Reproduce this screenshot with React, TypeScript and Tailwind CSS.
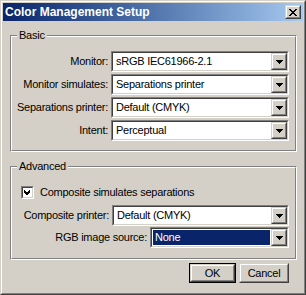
import React from "react";

const sunkenOuter =
  "border border-t-[#808080] border-l-[#808080] border-b-white border-r-white";
const sunkenInner =
  "border border-t-[#404040] border-l-[#404040] border-b-[#d4d0c8] border-r-[#d4d0c8]";
const raisedOuter =
  "border border-t-[#d4d0c8] border-l-[#d4d0c8] border-b-[#404040] border-r-[#404040]";
const raisedInner =
  "border border-t-white border-l-white border-b-[#808080] border-r-[#808080]";

const font = "font-['Liberation_Sans',Arial,sans-serif]";

function Arrow() {
  return (
    <svg width="7" height="4" viewBox="0 0 7 4" shapeRendering="crispEdges">
      <rect x="0" y="0" width="7" height="1" fill="#000" />
      <rect x="1" y="1" width="5" height="1" fill="#000" />
      <rect x="2" y="2" width="3" height="1" fill="#000" />
      <rect x="3" y="3" width="1" height="1" fill="#000" />
    </svg>
  );
}

function Combo({ value, selected, width }: { value: string; selected?: boolean; width: string }) {
  return (
    <div className={`${sunkenOuter} h-[21px] ${width} shrink-0`}>
      <div className={`${sunkenInner} h-full flex bg-white`}>
        <div className="flex-1 flex p-[1px]">
          <div
            className={`flex-1 flex items-center pl-[2px] leading-none whitespace-nowrap ${
              selected ? "bg-[#0a246a] text-white" : "text-black"
            }`}
          >
            {value}
          </div>
        </div>
        <div className={`${raisedOuter} w-[16px] h-full bg-[#d4d0c8]`}>
          <div className={`${raisedInner} h-full flex items-center justify-center`}>
            <Arrow />
          </div>
        </div>
      </div>
    </div>
  );
}

function GroupBox({
  label,
  className,
  children,
}: {
  label: string;
  className: string;
  children: React.ReactNode;
}) {
  return (
    <div
      className={`relative border border-t-[#808080] border-l-[#808080] border-b-white border-r-white ${className}`}
    >
      <div className="border border-t-white border-l-white border-b-[#808080] border-r-[#808080] h-full">
        {children}
      </div>
      <div className="absolute left-[6px] top-[-7px] px-[2px] bg-[#d4d0c8] leading-[13px] text-black whitespace-nowrap">
        {label}
      </div>
    </div>
  );
}

function Row({ label, value }: { label: string; value: string }) {
  return (
    <div className="flex items-center justify-end gap-[3px] h-[21px]">
      <span className="leading-none whitespace-nowrap">{label}</span>
      <Combo value={value} width="w-[178px]" />
    </div>
  );
}

function Button({ label, isDefault, width }: { label: string; isDefault?: boolean; width: string }) {
  const inner = (
    <div className={`${raisedOuter} h-full`}>
      <div className={`${raisedInner} h-full flex items-center justify-center leading-none`}>
        {label}
      </div>
    </div>
  );
  return (
    <div className={`${width} h-[20px] ${isDefault ? "border border-black" : ""}`}>{inner}</div>
  );
}

export default function App() {
  return (
    <div
      className={`w-[306px] h-[295px] bg-[#d4d0c8] border border-t-[#d4d0c8] border-l-[#d4d0c8] border-b-[#404040] border-r-[#404040] text-[11px] tracking-[-0.25px] text-black ${font}`}
    >
      <div className="h-full border border-t-white border-l-white border-b-[#808080] border-r-[#808080] p-[1px] flex flex-col">
        <div className="h-[18px] shrink-0 flex items-center justify-between bg-gradient-to-r from-[#0a246a] to-[#a6caf0] pl-[2px] pr-[2px]">
          <span className="font-bold text-[12px] tracking-normal text-white leading-none">
            Color Management Setup
          </span>
          <div className={`${raisedOuter} w-[16px] h-[14px] bg-[#d4d0c8]`}>
            <div className={`${raisedInner} h-full flex items-center justify-center`}>
              <svg width="8" height="7" viewBox="0 0 8 7" shapeRendering="crispEdges">
                <path
                  d="M0 0h2v1H0zM6 0h2v1H6zM1 1h2v1H1zM5 1h2v1H5zM2 2h4v1H2zM3 3h2v1H3zM2 4h4v1H2zM1 5h2v1H1zM5 5h2v1H5zM0 6h2v1H0zM6 6h2v1H6z"
                  fill="#000"
                />
              </svg>
            </div>
          </div>
        </div>

        <GroupBox label="Basic" className="mt-[14px] ml-[7px] w-[287px] h-[117px] shrink-0">
          <div className="flex flex-col gap-[2px] pt-[14px] pr-[6px]">
            <Row label="Monitor:" value="sRGB IEC61966-2.1" />
            <Row label="Monitor simulates:" value="Separations printer" />
            <Row label="Separations printer:" value="Default (CMYK)" />
            <Row label="Intent:" value="Perceptual" />
          </div>
        </GroupBox>

        <GroupBox label="Advanced" className="mt-[14px] ml-[7px] w-[287px] h-[94px] shrink-0">
          <div className="flex flex-col pt-[18px] pr-[6px]">
            <div className="flex items-center pl-[9px] h-[13px]">
              <div className={`${sunkenOuter} w-[13px] h-[13px]`}>
                <div className={`${sunkenInner} h-full bg-white flex items-center justify-center`}>
                  <svg width="7" height="7" viewBox="0 0 7 7" shapeRendering="crispEdges">
                    <path d="M6 0v3L3 6H2L0 4V1l2 2h1z" fill="#000" />
                  </svg>
                </div>
              </div>
              <span className="ml-[6px] leading-none whitespace-nowrap">Composite simulates separations</span>
            </div>
            <div className="flex items-center justify-end gap-[3px] h-[21px] mt-[6px]">
              <span className="leading-none whitespace-nowrap">Composite printer:</span>
              <Combo value="Default (CMYK)" width="w-[177px]" />
            </div>
            <div className="flex items-center justify-end gap-[3px] h-[21px] mt-[1px]">
              <span className="leading-none whitespace-nowrap">RGB image source:</span>
              <Combo value="None" selected width="w-[139px]" />
            </div>
          </div>
        </GroupBox>

        <div className="flex justify-end gap-[3px] mt-[3px] pr-[14px]">
          <Button label="OK" isDefault width="w-[47px]" />
          <Button label="Cancel" width="w-[50px]" />
        </div>
      </div>
    </div>
  );
}
